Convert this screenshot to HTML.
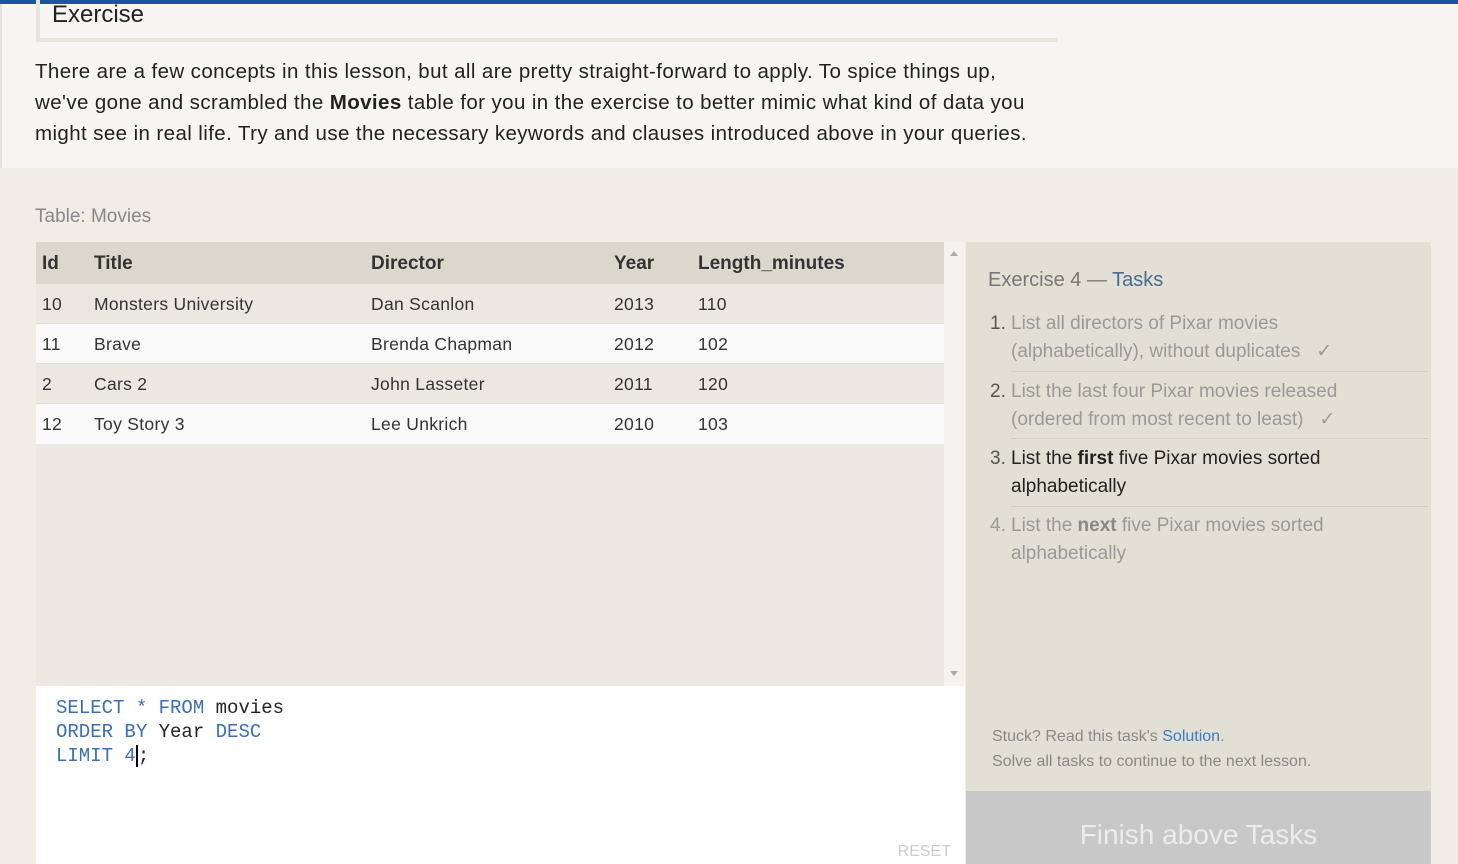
<!DOCTYPE html>
<html><head><style>
*{margin:0;padding:0;box-sizing:border-box}
html,body{width:1458px;height:864px;overflow:hidden}
body{background:#efede6;font-family:"Liberation Sans",sans-serif;position:relative;color:#222}
.abs{position:absolute}
.top{left:0;top:0;width:1458px;height:168px;background:#f6f5f1;border-left:2px solid #e3e1da}
.bar{left:0;top:0;width:1458px;height:4px;background:#1d56a0}
.exbox{left:36px;top:-10px;width:1021px;height:52px;border-left:4px solid #e6e5dd;border-bottom:4px solid #e6e5dd}
.extitle{left:52px;top:0;font-size:24px;line-height:30px;color:#222}
.para{left:35px;top:56px;font-size:20.5px;line-height:31px;color:#222;width:1100px;white-space:nowrap;letter-spacing:0.4px}
.tl{left:35px;top:206px;font-size:19px;color:#888}
.tbl{left:36px;top:242px;width:908px;height:444px;background:#eae8e1}
.row{position:absolute;left:0;width:908px;height:40px;font-size:17.5px;line-height:40px;color:#333;letter-spacing:0.3px}
.row span{position:absolute}
.scroll{left:944px;top:242px;width:21px;height:444px;background:#f4f3ef}
.editor{left:36px;top:686px;width:929px;height:178px;background:#fff;font-family:"Liberation Mono",monospace;font-size:19px;line-height:24px}
.kw{color:#3a6fb0}
.panel{left:966px;top:242px;width:465px;height:549px;background:#e2e0d5}
.btn{left:966px;top:791px;width:465px;height:73px;background:#c8c8c8;color:#ececec;font-size:28px;text-align:center;line-height:88px}
.task{position:absolute;left:45px;width:420px;font-size:19px;line-height:28px;color:#999;padding-bottom:6px;white-space:nowrap}
.task .n{position:absolute;left:-21px;color:#555}
.sep{position:absolute;left:45px;width:418px;height:1px;background:#d2d0c5}
</style></head><body>
<div class="abs top"></div>
<div class="abs bar"></div>
<div class="abs exbox"></div>
<div class="abs extitle">Exercise</div>
<div class="abs para">There are a few concepts in this lesson, but all are pretty straight-forward to apply. To spice things up,<br>we've gone and scrambled the <b>Movies</b> table for you in the exercise to better mimic what kind of data you<br>might see in real life. Try and use the necessary keywords and clauses introduced above in your queries.</div>
<div class="abs tl">Table: Movies</div>
<div class="abs tbl">
<div class="row" style="top:0;height:42px;line-height:44px;background:#dad8cd;font-weight:bold;color:#333;font-size:19px;letter-spacing:0"><span style="left:6px">Id</span><span style="left:58px">Title</span><span style="left:335px">Director</span><span style="left:578px">Year</span><span style="left:662px">Length_minutes</span></div>
<div class="row" style="top:42px;background:#eae8e1;border-bottom:1px solid #dedcd5"><span style="left:6px">10</span><span style="left:58px">Monsters University</span><span style="left:335px">Dan Scanlon</span><span style="left:578px">2013</span><span style="left:662px">110</span></div>
<div class="row" style="top:82px;background:#f9f9f9;border-bottom:1px solid #dedcd5"><span style="left:6px">11</span><span style="left:58px">Brave</span><span style="left:335px">Brenda Chapman</span><span style="left:578px">2012</span><span style="left:662px">102</span></div>
<div class="row" style="top:122px;background:#eae8e1;border-bottom:1px solid #dedcd5"><span style="left:6px">2</span><span style="left:58px">Cars 2</span><span style="left:335px">John Lasseter</span><span style="left:578px">2011</span><span style="left:662px">120</span></div>
<div class="row" style="top:162px;background:#f9f9f9"><span style="left:6px">12</span><span style="left:58px">Toy Story 3</span><span style="left:335px">Lee Unkrich</span><span style="left:578px">2010</span><span style="left:662px">103</span></div>
</div>
<div class="abs scroll"><div style="position:absolute;left:6px;top:9px;border:4px solid transparent;border-bottom:5px solid #aaa;border-top:0"></div><div style="position:absolute;left:6px;top:429px;border:4px solid transparent;border-top:5px solid #aaa;border-bottom:0"></div></div>
<div class="abs editor">
<div style="position:absolute;left:20px;top:10px;white-space:pre"><span class="kw">SELECT * FROM</span> movies
<span class="kw">ORDER BY</span> Year <span class="kw">DESC</span>
<span class="kw">LIMIT 4</span><span style="border-left:2px solid #000">;</span></div>
<div style="position:absolute;right:14px;bottom:0;font-family:'Liberation Sans',sans-serif;font-size:16px;color:#ccc">RESET</div>
</div>
<div class="abs panel">
<div style="position:absolute;left:22px;top:27px;font-size:20px;color:#777">Exercise 4 — <span style="color:#4a6a90">Tasks</span></div>
<div class="task" style="top:68px"><span class="n">1.</span>List all directors of Pixar movies<br>(alphabetically), without duplicates &nbsp;&nbsp;✓</div>
<div class="sep" style="top:129px"></div>
<div class="task" style="top:136px"><span class="n">2.</span>List the last four Pixar movies released<br>(ordered from most recent to least) &nbsp;&nbsp;✓</div>
<div class="sep" style="top:196px"></div>
<div class="task" style="top:203px;color:#222"><span class="n">3.</span>List the <b>first</b> five Pixar movies sorted<br>alphabetically</div>
<div class="sep" style="top:264px"></div>
<div class="task" style="top:270px"><span class="n" style="color:#999">4.</span>List the <b style="color:#888">next</b> five Pixar movies sorted<br>alphabetically</div>
<div style="position:absolute;left:26px;top:482px;font-size:16px;line-height:25px;color:#888">Stuck? Read this task's <span style="color:#3a7cc0">Solution</span>.<br>Solve all tasks to continue to the next lesson.</div>
</div>
<div class="abs btn">Finish above Tasks</div>
</body></html>
